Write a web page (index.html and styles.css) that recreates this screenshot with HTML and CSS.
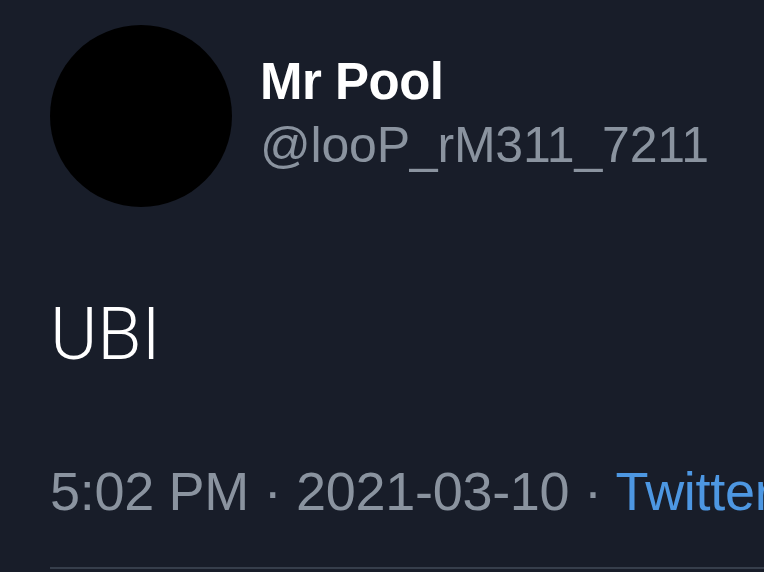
FILE: index.html
```html
<!DOCTYPE html>
<html lang="en">
<head>
    <meta charset="UTF-8">
    <meta name="viewport" content="width=device-width, initial-scale=1.0">
    <title>Mr Pool on Twitter</title>
    <link rel="stylesheet" href="styles.css">
</head>
<body>

    <div class="tweet">
        <div class="tweet-header">
            <div class="avatar"></div>
            <div class="user">
                <div class="user-name">Mr Pool</div>
                <div class="user-handle">@looP_rM311_7211</div>
            </div>
        </div>

        <p class="tweet-text">UBI</p>

        <div class="tweet-meta">
            <span>5:02 PM</span> · <span>2021-03-10</span> · <a class="source" href="#">Twitter for iPhone</a>
        </div>

        <div class="divider"></div>
    </div>

</body>
</html>
```

FILE: styles.css
```css
body {
    font-family: 'Liberation Sans', Arial, sans-serif;
    margin: 0;
    padding: 0;
    background-color: #181d29;
    width: 764px;
    height: 572px;
    overflow: hidden;
}

.tweet {
    padding: 25px 0 0 50px;
}

.tweet-header {
    display: flex;
    align-items: flex-start;
    gap: 28px;
}

.avatar {
    width: 182px;
    height: 182px;
    border-radius: 50%;
    background-color: #000;
    flex-shrink: 0;
}

.user {
    padding-top: 28px;
}

.user-name {
    color: #fff;
    font-size: 51px;
    font-weight: bold;
    letter-spacing: -0.5px;
    line-height: 58px;
}

.user-handle {
    margin-top: 4px;
    color: #8a939f;
    font-size: 50px;
    letter-spacing: -0.2px;
    line-height: 60px;
}

.tweet-text {
    color: #fff;
    font-family: Roboto, 'Liberation Sans', sans-serif;
    font-weight: 300;
    font-size: 72px;
    line-height: 80px;
    margin: 88px 0 0 0;
}

.tweet-meta {
    margin-top: 86px;
    white-space: nowrap;
    color: #8a939f;
    font-size: 54px;
    letter-spacing: -0.3px;
    line-height: 60px;
}

.source {
    color: #4d97e2;
    text-decoration: none;
}

.divider {
    margin-top: 46px;
    height: 2px;
    background-color: #363e4b;
}
```
